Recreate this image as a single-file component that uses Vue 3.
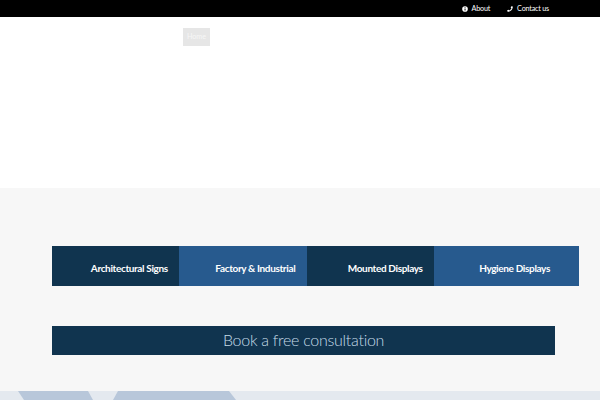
<template>
  <div class="page">
    <div class="topbar">
      <a class="toplink">
        <svg class="ico" viewBox="0 0 16 16"><circle cx="8" cy="8" r="7.5" fill="#fff" /><rect x="6.800" y="7" width="2.600" height="5" fill="#000" /><rect x="6.800" y="3.500" width="2.600" height="2.200" fill="#000" /></svg>
        About
      </a>
      <a class="toplink">
        <svg class="ico" viewBox="0 0 16 16"><path d="M15.500 1.500 11.500.5 9.800 4.500l2 1.600c-1 2.500-3.200 4.700-5.800 5.800L4.400 9.900.5 11.600l1 4C9.500 15.500 15.700 9 15.500 1.500Z" fill="#fff" /></svg>
        Contact us
      </a>
    </div>

    <header class="header">
      <nav class="nav"><span class="home">Home</span></nav>
    </header>

    <section class="main">
      <div class="tiles">
        <div v-for="t in tiles" :key="t.label" class="tile" :class="t.cls">{{ t.label }}</div>
      </div>
      <div class="cta">Book a free consultation</div>
    </section>

    <div class="strip">
      <svg width="600" height="9" viewBox="0 0 600 9"><polygon points="18,0 88,0 93,9 24,9" fill="#b8c7da" /><polygon points="118,0 229,0 236,9 113,9" fill="#b8c7da" /></svg>
    </div>
  </div>
</template>

<script setup>
const tiles = [
  { label: "Architectural Signs", cls: "dark" },
  { label: "Factory & Industrial", cls: "blue" },
  { label: "Mounted Displays", cls: "dark" },
  { label: "Hygiene Displays", cls: "blue wide" }
];
</script>

<style>
html, body { margin: 0; overflow: hidden; }
</style>

<style scoped>
.page {
  width: 600px;
  height: 400px;
  overflow: hidden;
  font-family: Lato, "Liberation Sans", sans-serif;
  background: #f7f7f7;
}

.topbar {
  height: 17px;
  background: #000;
  display: flex;
  justify-content: flex-end;
  align-items: center;
  gap: 17px;
  padding-right: 51px;
}

.toplink {
  display: flex;
  align-items: center;
  gap: 4px;
  color: #fff;
  font-size: 7.200px;
  line-height: 17px;
  letter-spacing: -0.2px;
}

.ico {
  width: 6px;
  height: 6px;
}

.header {
  height: 171px;
  background: #fff;
}

.nav {
  padding: 11px 0 0 183px;
}

.home {
  display: block;
  width: 27px;
  height: 18px;
  line-height: 18px;
  text-align: center;
  background: #e6e6e6;
  color: #f6f6f6;
  font-size: 7.200px;
}

.main {
  height: 203px;
  padding: 58px 0 0 52px;
  box-sizing: border-box;
}

.tiles {
  display: flex;
  width: 527px;
  height: 40px;
}

.tile {
  width: 127.400px;
  box-sizing: border-box;
  padding-right: 11.500px;
  color: #fff;
  font-size: 10px;
  font-weight: 700;
  line-height: 45px;
  text-align: right;
  letter-spacing: -0.35px;
}

.dark { background: #10344f; }
.blue { background: #275a8e; }

.wide {
  width: 144.800px;
  padding-right: 29px;
}

.cta {
  width: 503px;
  height: 29px;
  margin-top: 40px;
  background: #10344f;
  color: #c5dbe8;
  font-size: 16px;
  font-weight: 300;
  line-height: 28px;
  text-align: center;
  letter-spacing: -0.27px;
}

.strip {
  height: 9px;
  background: #e4e9ef;
}

.strip svg {
  display: block;
}
</style>
